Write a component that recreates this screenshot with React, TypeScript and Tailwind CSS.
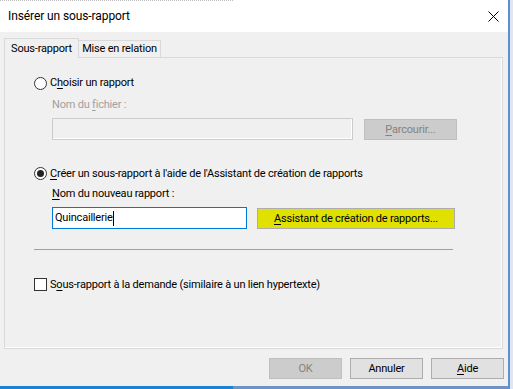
const font = { fontFamily: 'Roboto, "Segoe UI", sans-serif' };

function Radio({ checked }: { checked?: boolean }) {
  return (
    <span className="w-[13px] h-[13px] rounded-full border border-[#333] bg-white flex items-center justify-center shrink-0">
      {checked && <span className="w-[7px] h-[7px] rounded-full bg-[#222]" />}
    </span>
  );
}

export default function App() {
  return (
    <div
      className="w-[513px] h-[389px] flex bg-[#f0f0f0] text-[11px] leading-[16px] tracking-[-0.2px] text-black overflow-hidden"
      style={font}
    >
      <div className="w-[508px] flex flex-col">
        {/* title bar */}
        <div className="h-[32px] bg-white relative flex items-center pl-[8px] shrink-0 text-[12px] tracking-[-0.1px]">
          <div className="absolute top-0 left-0 w-[233px] border-t border-dotted border-[#bdbdbd]" />
          <span>Insérer un sous-rapport</span>
          <svg className="ml-auto mr-[9px]" width="11" height="11" viewBox="0 0 11 11">
            <path d="M0.5 0.5 L10.5 10.5 M10.5 0.5 L0.5 10.5" stroke="#000" strokeWidth="1" fill="none" />
          </svg>
        </div>

        <div className="flex-1 flex flex-col px-[4px]">
          {/* tabs */}
          <div className="flex items-end h-[25px]">
            <div className="h-[20px] w-[75px] border border-b-0 border-[#d9d9d9] bg-[#f0f0f0] flex items-center justify-center relative top-[1px] z-10">
              Sous-rapport
            </div>
            <div className="h-[17px] w-[82px] border border-l-0 border-b-0 border-[#d9d9d9] flex items-center justify-center">
              Mise en relation
            </div>
          </div>

          {/* panel */}
          <div className="w-[499px] h-[292px] border border-[#d9d9d9] shadow-[inset_-1px_-1px_0_#ffffff] flex flex-col pl-[29px]">
            <div className="mt-[18px] flex items-center gap-[3px] h-[14px]">
              <Radio />
              <span>
                C<u className="underline-offset-2">h</u>oisir un rapport
              </span>
            </div>
            <div className="mt-[7px] ml-[18px] text-[#a0a0a0]">
              Nom du <u className="underline-offset-2">f</u>ichier :
            </div>
            <div className="mt-[5px] ml-[18px] flex items-start gap-[11px]">
              <div className="w-[301px] h-[22px] border border-[#cccccc] shadow-[inset_-1px_-1px_0_#ffffff]" />
              <div className="mt-[1px] w-[93px] h-[21px] bg-[#cccccc] border border-[#bfbfbf] text-[#838383] flex items-center justify-center">
                <span>
                  <u className="underline-offset-2">P</u>arcourir...
                </span>
              </div>
            </div>

            <div className="mt-[27px] flex items-center gap-[3px] h-[13px]">
              <Radio checked />
              <span>
                <u className="underline-offset-2">C</u>réer un sous-rapport à l'aide de l'Assistant de création de rapports
              </span>
            </div>
            <div className="mt-[6px] ml-[18px]">
              <u className="underline-offset-2">N</u>om du nouveau rapport :
            </div>
            <div className="mt-[5px] ml-[18px] flex items-start gap-[10px]">
              <div className="w-[195px] h-[22px] border border-[#0078d7] bg-white flex items-center pl-[2px]">
                <span>Quincaillerie</span>
                <span className="w-px h-[15px] bg-black" />
              </div>
              <div className="mt-[1px] w-[198px] h-[21px] bg-[#e1e100] border border-[#adadad] flex items-center justify-center">
                <span>
                  <u className="underline-offset-2">A</u>ssistant de création de rapports...
                </span>
              </div>
            </div>

            <div className="mt-[20px] w-[419px] h-px bg-[#a0a0a0]" />

            <div className="mt-[28px] flex items-center gap-[3px] h-[13px]">
              <span className="w-[13px] h-[13px] border border-[#333] bg-white shrink-0" />
              <span>
                S<u className="underline-offset-2">o</u>us-rapport à la demande (similaire à un lien hypertexte)
              </span>
            </div>
          </div>

          {/* buttons */}
          <div className="mt-[9px] flex justify-end gap-[8px]">
            <div className="w-[73px] h-[21px] bg-[#cccccc] border border-[#bfbfbf] text-[#838383] flex items-center justify-center">
              OK
            </div>
            <div className="w-[73px] h-[21px] bg-[#e1e1e1] border border-[#adadad] flex items-center justify-center">
              Annuler
            </div>
            <div className="w-[73px] h-[21px] bg-[#e1e1e1] border border-[#adadad] flex items-center justify-center">
              <span>
                <u className="underline-offset-2">A</u>ide
              </span>
            </div>
          </div>
        </div>

        <div className="h-[3px] flex shrink-0">
          <div className="w-[233px] bg-[#1883d7]" />
          <div className="flex-1 bg-[#6f94c4]" />
        </div>
      </div>
      <div className="w-[2px] bg-[#5b8fd0]" />
      <div className="flex-1 bg-[#dfe6ef]" />
    </div>
  );
}
